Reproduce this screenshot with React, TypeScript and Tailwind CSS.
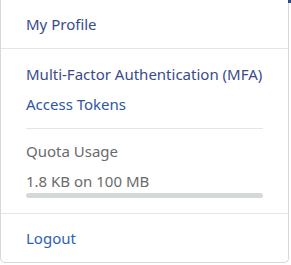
import React from "react";

export default function App() {
  return (
    <div className="w-[291px] h-[265px] bg-white relative overflow-hidden" style={{ fontFamily: '"Noto Sans", "Open Sans", sans-serif' }}>
      <div className="absolute right-0 top-0 w-[3px] h-[3px] bg-[#2b4a8a]" />
      <div className="w-[289px] border-x border-b border-[#d6d8da] rounded-b-[5px] bg-white text-[15px] leading-[20px]">
        <div className="h-[48px] flex items-center px-[25px] text-[#3a4b8a]">My Profile</div>
        <div className="border-t border-[#e3e5e8]" />
        <div className="px-[25px] pt-[10px]">
          <div className="h-[30px] flex items-center text-[#3a4b8a]">Multi-Factor Authentication (MFA)</div>
          <div className="h-[30px] flex items-center text-[#2d55a6]">Access Tokens</div>
          <div className="mt-[9px] border-t border-[#e3e5e8]" />
          <div className="pt-[7px] h-[37px] flex items-end pb-[5px] text-[#6b6b6b]">Quota Usage</div>
          <div className="h-[25px] flex items-end text-[#6b6b6b]">1.8 KB on 100 MB</div>
          <div className="mt-[2px] h-[5px] rounded-full bg-[#d5d8d9]" />
        </div>
        <div className="mt-[15px] border-t border-[#e3e5e8]" />
        <div className="h-[48px] flex items-center px-[25px] text-[#2b62b6]">Logout</div>
      </div>
    </div>
  );
}
